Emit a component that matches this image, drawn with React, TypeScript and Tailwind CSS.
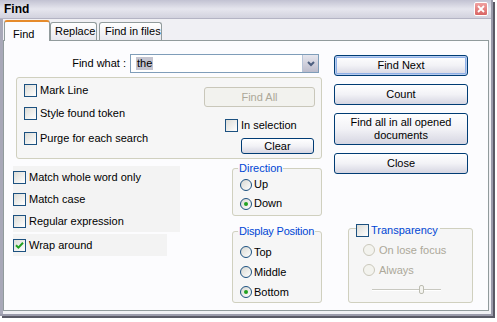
import React from 'react';

function Check({ checked, className = '' }: { checked?: boolean; className?: string }) {
  return (
    <span
      className={`w-[13px] h-[13px] shrink-0 border border-[#1c5180] bg-linear-to-br from-[#dcdcd7] to-white flex items-center justify-center ${className}`}
    >
      {checked && (
        <svg width="9" height="9" viewBox="0 0 9 9">
          <path d="M1 4.2 L3.4 6.6 L8 1.8" stroke="#21a121" strokeWidth="2" fill="none" />
        </svg>
      )}
    </span>
  );
}

function Radio({ on, disabled }: { on?: boolean; disabled?: boolean }) {
  return (
    <span
      className={
        disabled
          ? 'w-[12px] h-[12px] shrink-0 rounded-full border border-[#cac8bb] bg-[#f3f3ee]'
          : 'w-[12px] h-[12px] shrink-0 rounded-full border border-[#1c5180] bg-linear-to-br from-[#d8d8d2] to-white flex items-center justify-center'
      }
    >
      {on && <span className="w-[4px] h-[4px] rounded-full bg-[#21a121]" />}
    </span>
  );
}

function Btn({ children, className = '' }: { children: React.ReactNode; className?: string }) {
  return (
    <div
      className={`flex items-center justify-center text-center leading-[13px] border border-[#003c74] rounded-[3px] bg-linear-to-b from-white via-[#f2f2f6] to-[#d6d6e2] text-black ${className}`}
    >
      {children}
    </div>
  );
}

const lowerOptions = [
  { label: 'Match whole word only', w: 'w-[167px]', checked: false },
  { label: 'Match case', w: 'w-[167px]', checked: false },
  { label: 'Regular expression', w: 'w-[167px]', checked: false },
  { label: 'Wrap around', w: 'w-[154px]', checked: true },
];

export default function App() {
  return (
    <div className="w-[497px] h-[322px] bg-white overflow-hidden font-['Liberation_Sans',Arial,sans-serif] text-[11px] text-black">
      <div className="w-[493px] h-[316px] flex flex-col border-r-2 border-b-2 border-[#9a9aaa] shadow-[2px_2px_0_#5a5a66] bg-[#f0f0f4]">
        {/* title bar */}
        <div className="h-[19px] shrink-0 flex items-center justify-between pl-[4px] pr-[3px] bg-linear-to-b from-[#c2c2d2] via-[#e6e6ee] to-[#d2d2de] border-b border-[#b4b4c4]">
          <span className="font-bold text-[12px]">Find</span>
          <span className="w-[14px] h-[14px] flex items-center justify-center rounded-[2px] border border-white bg-linear-to-b from-[#f0a0a0] to-[#d86464]">
            <svg width="8" height="8" viewBox="0 0 8 8">
              <path d="M1 1 L7 7 M7 1 L1 7" stroke="white" strokeWidth="1.8" />
            </svg>
          </span>
        </div>

        <div className="flex-1 flex flex-col border-l-[3px] border-[#a8a8b8]">
          {/* tabs */}
          <div className="h-[21px] shrink-0 flex items-end pl-[1px] relative z-10">
            <div className="h-[21px] w-[46px] -mb-px flex items-start pt-[4px] pl-[8px] bg-[#fcfcfe] border-x border-[#919b9c] border-t-2 border-t-[#e68b2c] rounded-t-[3px]">
              Find
            </div>
            <div className="h-[18px] w-[47px] flex items-center pl-[4px] border border-b-0 border-[#919b9c] rounded-t-[3px] bg-linear-to-b from-white to-[#e8e8ee]">
              Replace
            </div>
            <div className="h-[18px] w-[63px] ml-[2px] flex items-center pl-[5px] border border-b-0 border-[#919b9c] rounded-t-[3px] bg-linear-to-b from-white to-[#e8e8ee]">
              Find in files
            </div>
          </div>

          {/* tab page */}
          <div className="flex-1 mr-[2px] mb-[3px] border border-[#919b9c] bg-[#fcfcfe] flex pl-[9px]">
            {/* left column */}
            <div className="w-[321px] flex flex-col pt-[13px]">
              <div className="flex items-center h-[19px]">
                <span className="w-[113px] text-right">Find what :</span>
                <div className="ml-[4px] w-[189px] h-[19px] border border-[#7f9db9] bg-white flex items-center justify-between">
                  <span className="ml-[5px] px-[1px] bg-[#c4c4cf] leading-[13px]">the</span>
                  <span className="w-[16px] h-[17px] border-l border-[#b8c4d8] bg-linear-to-b from-[#e6e6ee] to-[#bcbccc] flex items-center justify-center">
                    <svg width="8" height="6" viewBox="0 0 8 6">
                      <path d="M1 1 L4 4 L7 1" stroke="#4d5f80" strokeWidth="2" fill="none" />
                    </svg>
                  </span>
                </div>
              </div>

              {/* options group */}
              <div className="mt-[4px] ml-[3px] w-[306px] h-[82px] border border-[#d0d0bf] rounded-[3px] bg-[#f6f6f6] flex justify-between">
                <div className="flex flex-col pt-[6px] pl-[7px]">
                  <label className="flex items-center gap-[3px] h-[13px]">
                    <Check /> Mark Line
                  </label>
                  <label className="flex items-center gap-[3px] h-[13px] mt-[10px]">
                    <Check /> Style found token
                  </label>
                  <label className="flex items-center gap-[3px] h-[13px] mt-[12px]">
                    <Check /> Purge for each search
                  </label>
                </div>
                <div className="w-[111px] mr-[6px] pt-[9px] flex flex-col">
                  <div className="h-[20px] flex items-center justify-center border border-[#c9c7ba] rounded-[3px] bg-[#f2f2ee] text-[#aca899]">
                    Find All
                  </div>
                  <label className="flex items-center gap-[3px] h-[13px] mt-[12px] pl-[21px]">
                    <Check /> In selection
                  </label>
                  <Btn className="mt-[6px] ml-[37px] w-[73px] h-[16px]">Clear</Btn>
                </div>
              </div>

              {/* lower area */}
              <div className="flex">
                <div className="w-[219px] flex flex-col pt-[7px]">
                  {lowerOptions.map((o, i) => (
                    <label
                      key={o.label}
                      className={`${o.w} h-[22px] flex items-center gap-[3px] bg-[#f3f3f3] ${i === 3 ? 'mt-[2px]' : ''}`}
                    >
                      <Check checked={o.checked} /> {o.label}
                    </label>
                  ))}
                </div>
                <div className="w-[90px] flex flex-col">
                  <fieldset className="mt-[3px] border border-[#d0d0bf] rounded-[3px] bg-[#f6f6f6] pb-[2px]">
                    <legend className="ml-[5px] px-[1px] text-[#0046d5] leading-[13px] whitespace-nowrap">Direction</legend>
                    <label className="h-[19px] pl-[7px] flex items-center gap-[2px]">
                      <Radio /> Up
                    </label>
                    <label className="h-[19px] pl-[7px] flex items-center gap-[2px]">
                      <Radio on /> Down
                    </label>
                  </fieldset>
                  <fieldset className="mt-[9px] border border-[#d0d0bf] rounded-[3px] bg-[#f6f6f6] pt-[4px]">
                    <legend className="ml-[5px] px-[1px] text-[#0046d5] leading-[13px] whitespace-nowrap tracking-[-0.2px]">
                      Display Position
                    </legend>
                    <label className="h-[20px] pl-[7px] flex items-center gap-[2px]">
                      <Radio /> Top
                    </label>
                    <label className="h-[20px] pl-[7px] flex items-center gap-[2px]">
                      <Radio /> Middle
                    </label>
                    <label className="h-[20px] pl-[7px] flex items-center gap-[2px]">
                      <Radio on /> Bottom
                    </label>
                  </fieldset>
                </div>
              </div>
            </div>

            {/* right column */}
            <div className="w-[139px] flex flex-col pt-[14px]">
              <div className="w-[134px] flex flex-col gap-2">
                <Btn className="h-[21px] shadow-[inset_0_0_0_1px_#b8cdf0,inset_0_0_0_2px_#8fb0e6]">Find Next</Btn>
                <Btn className="h-[21px]">Count</Btn>
                <Btn className="h-[32px] px-[4px]">
                  Find all in all opened
                  <br />
                  documents
                </Btn>
                <Btn className="h-[21px]">Close</Btn>
              </div>
              <fieldset className="mt-[50px] ml-[14px] w-[125px] border border-[#d0d0bf] rounded-[3px] bg-[#f6f6f6] pl-[14px] pt-[7px] pb-[2px]">
                <legend className="-ml-[7px] h-[9px] flex items-start gap-[2px] text-[#0046d5] pr-[2px]">
                  <Check />
                  <span className="leading-[13px]">Transparency</span>
                </legend>
                <div className="h-[20px] flex items-center gap-[4px] text-[#aca899]">
                  <Radio disabled /> On lose focus
                </div>
                <div className="h-[20px] flex items-center gap-[4px] text-[#aca899]">
                  <Radio disabled /> Always
                </div>
                <div className="h-[20px] flex items-center pl-[9px]">
                  <div className="w-[69px] h-[2px] bg-[#c8c8c0] border-b border-white flex items-center">
                    <span className="ml-[47px] w-[5px] h-[9px] rounded-[2px] border border-[#bdbdb2] bg-[#f4f4f0]" />
                  </div>
                </div>
              </fieldset>
            </div>
          </div>
        </div>
      </div>
    </div>
  );
}
